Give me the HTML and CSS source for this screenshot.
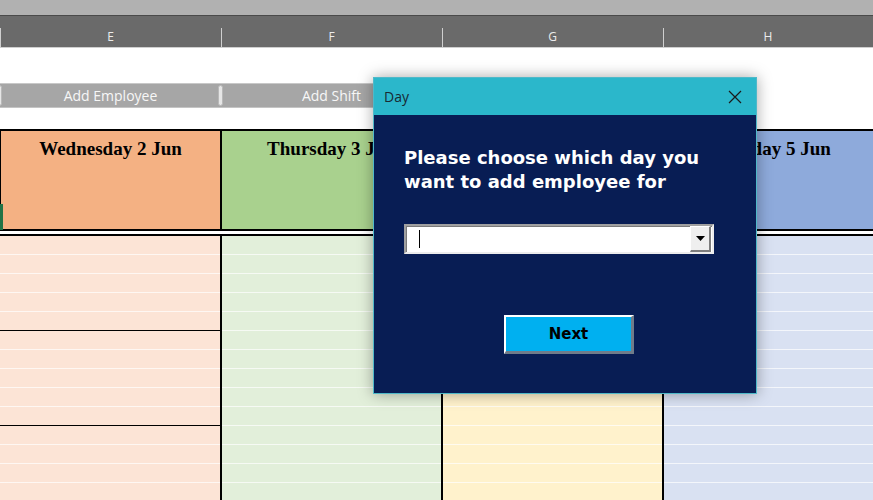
FILE: index.html
```html
<!DOCTYPE html>
<html>
<head>
<meta charset="utf-8">
<link rel="stylesheet" href="styles.css">
</head>
<body>
<div class="app">
  <div class="topbar"></div>
  <div class="colheads">
    <div class="colhead">E</div>
    <div class="colhead">F</div>
    <div class="colhead">G</div>
    <div class="colhead">H</div>
  </div>
  <div class="toolbar">
    <div class="tbtn"><span class="pill"></span><span class="tlabel">Add Employee</span></div>
    <div class="tbtn"><span class="pill"></span><span class="tlabel">Add Shift</span></div>
    <div class="tbtn"></div>
    <div class="tbtn"></div>
  </div>
  <div class="sheet">
    <div class="col col-e">
      <div class="head">Wednesday 2 Jun</div>
      <div class="gap"></div>
      <div class="body">
        <div class="block"></div>
        <div class="block"></div>
        <div class="block"></div>
      </div>
    </div>
    <div class="col col-f">
      <div class="head">Thursday 3 Jun</div>
      <div class="gap"></div>
      <div class="body"></div>
    </div>
    <div class="col col-g">
      <div class="head"></div>
      <div class="gap"></div>
      <div class="body"></div>
    </div>
    <div class="col col-h">
      <div class="head">Saturday 5 Jun</div>
      <div class="gap"></div>
      <div class="body"></div>
    </div>
  </div>
  <div class="selmark"></div>

  <div class="dialog">
    <div class="titlebar">
      <span class="title">Day</span>
      <svg class="close" width="14" height="14" viewBox="0 0 14 14"><path d="M1 1 L13 13 M13 1 L1 13" stroke="#1b1b1b" stroke-width="1.2" fill="none"/></svg>
    </div>
    <div class="dbody">
      <p class="question">Please choose which day you<br>want to add employee for</p>
      <div class="combo">
        <span class="caret"></span>
        <span class="dropbtn"><svg width="9" height="5" viewBox="0 0 9 5"><path d="M0 0 H9 L4.5 5 Z" fill="#000"/></svg></span>
      </div>
      <div class="btnrow"><button class="next">Next</button></div>
    </div>
  </div>
</div>
</body>
</html>
```
FILE: styles.css
```css
html, body { margin: 0; padding: 0; }
body { background: #fff; font-family: "Open Sans", sans-serif; }
.app { position: relative; width: 873px; height: 500px; overflow: hidden; background: #fff; }

.topbar { height: 15px; background: #b1b1b1; border-bottom: 1px solid #4a4a4a; }

.colheads { display: grid; grid-template-columns: 221px 221px 221px 1fr; height: 31px; background: #6a6a6a; border-bottom: 1px solid #cfcfcf; }
.colhead { position: relative; display: flex; align-items: flex-end; justify-content: center; padding-bottom: 3px; color: #ececec; font-size: 12px; line-height: 15px; }
.colhead::before { content: ""; position: absolute; left: 0; bottom: 0; width: 1px; height: 19px; background: #cfcfcf; }

.toolbar { display: grid; grid-template-columns: 221px 221px 221px 1fr; height: 81px; padding-top: 35px; box-sizing: border-box; }
.tbtn { position: relative; height: 25px; display: flex; align-items: center; justify-content: center; }
.toolbar .tbtn:nth-child(1), .toolbar .tbtn:nth-child(2) { background: #a6a6a6; border-top: 1px solid #c8c8c8; border-bottom: 1px solid #c4c4c4; box-sizing: border-box; }
.tlabel { color: #f7f7f7; font-size: 14px; line-height: 18px; }
.pill { position: absolute; left: -3px; top: 1px; width: 5px; height: 21px; border-radius: 3px; background: #e6e6e6; border: 1px solid #b8b8b8; box-sizing: border-box; }

.sheet { display: grid; grid-template-columns: 222px 221px 221px 1fr; border-top: 2px solid #000; height: 371px; }
.col { display: flex; flex-direction: column; }
.head { height: 100px; box-sizing: border-box; padding-top: 7px; text-align: center; font-family: "Liberation Serif", serif; font-weight: bold; font-size: 19px; line-height: 21px; color: #000; border-right: 2px solid #000; border-bottom: 2px solid #000; }
.gap { height: 3px; background: #fff; }
.body { flex: 1; border-top: 2px solid #000; border-right: 2px solid #000;
  background-image: repeating-linear-gradient(to bottom, transparent 0 18px, rgba(255,255,255,0.7) 18px 19px); }
.col-e .head { background: #f4b183; border-left: 1px solid #000; }
.col-e .body { background-color: #fce4d6; }
.col-f .head { background: #a9d18e; }
.col-f .body { background-color: #e2efda; }
.col-g .head { background: #ffd966; }
.col-g .body { background-color: #fff2cc; }
.col-h .head { background: #8eaadb; border-right: none; }
.col-h .body { background-color: #d9e1f2; border-right: none; }
.block { height: 95px; box-sizing: border-box; border-bottom: 1px solid #000; }

.selmark { position: absolute; left: 0; top: 204px; width: 3px; height: 26px; background: #217346; }

.dialog { position: absolute; left: 373px; top: 77px; width: 384px; height: 317px; box-sizing: border-box; border: 1px solid #4fb9c9; background: #081d54; box-shadow: 0 0 14px rgba(0,0,0,0.35); display: flex; flex-direction: column; }
.titlebar { height: 37px; background: #2bb7cb; display: flex; align-items: center; justify-content: space-between; padding: 0 14px 0 10px; flex-shrink: 0; }
.title { font-family: "Open Sans", sans-serif; font-size: 14px; color: #182a33; line-height: 18px; padding-top: 1px; }
.close { display: block; }
.dbody { flex: 1; padding: 0 0 0 30px; }
.question { margin: 31px 0 0; color: #fff; font-family: "DejaVu Sans", Verdana, sans-serif; font-weight: bold; font-size: 18px; line-height: 24px; }
.combo { position: relative; margin-top: 30px; width: 310px; height: 30px; box-sizing: border-box; background: #fff; border-style: solid; border-width: 2px; border-color: #a0a0a0 #ececec #ececec #a0a0a0; box-shadow: inset 1px 1px 0 #7a7a7a; }
.caret { position: absolute; left: 13px; top: 4px; width: 1px; height: 18px; background: #000; }
.dropbtn { position: absolute; right: 1px; top: 0; width: 21px; height: 26px; box-sizing: border-box; background: #efefef; border-style: solid; border-width: 1px 2px 2px 1px; border-color: #fff #7d7d7d #7d7d7d #fff; display: flex; align-items: center; justify-content: center; }
.dropbtn svg { display: block; }
.btnrow { margin-top: 61px; padding-left: 100px; }
.next { display: block; width: 130px; height: 39px; box-sizing: border-box; background: #00b0f0; border-style: solid; border-width: 2px 3px 3px 2px; border-color: #ffffff #6f7c8a #6f7c8a #ffffff; font-family: "DejaVu Sans", Verdana, sans-serif; font-weight: bold; font-size: 15px; color: #000; padding: 0; }
```
